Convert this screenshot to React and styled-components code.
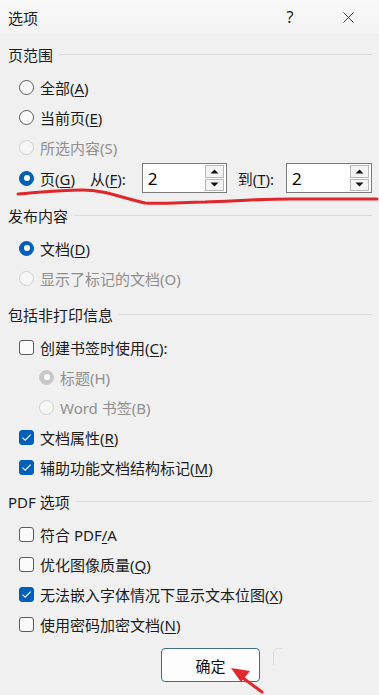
import React from "react";
import styled, { createGlobalStyle } from "styled-components";
import { X } from "lucide-react";

const GlobalStyle = createGlobalStyle`
  html, body {
    margin: 0;
    padding: 0;
    background: #f0f0f0;
  }
  body {
    font-family: "Noto Sans", "Noto Sans CJK SC", sans-serif;
    color: #1b1b1b;
  }
  u {
    text-underline-offset: 2px;
    text-decoration-thickness: 1px;
  }
`;

const Dialog = styled.div`
  position: relative;
  width: 379px;
  height: 695px;
  overflow: hidden;
  background: #f0f0f0;
`;

const TitleBar = styled.div`
  height: 34px;
  display: flex;
  align-items: center;
  padding: 0 8px;
  background: linear-gradient(#f9f9f9, #f3f3f3);
  font-size: 15px;
`;

const Title = styled.div`
  flex: 1;
`;

const TitleButton = styled.div`
  width: 46px;
  display: flex;
  justify-content: center;
  align-items: center;
  font-size: 16px;
  color: #222;
  margin-left: ${(p) => p.$gap || 0}px;
`;

const Body = styled.div`
  padding: 9px 7px 0 8px;
`;

const Section = styled.div`
  margin-bottom: ${(p) => p.$after ?? 10}px;
`;

const SectionHeader = styled.div`
  height: 22px;
  display: flex;
  align-items: center;
  gap: 6px;
  font-size: 15px;
  margin-bottom: 7px;

  &::after {
    content: "";
    flex: 1;
    height: 1px;
    background: #dadada;
  }
`;

const Row = styled.div`
  height: ${(p) => p.$h || 30}px;
  display: flex;
  align-items: center;
  padding-left: ${(p) => p.$indent || 11}px;
  font-size: 15px;
`;

const Radio = styled.span`
  box-sizing: border-box;
  width: 15px;
  height: 15px;
  border-radius: 50%;
  flex: none;
  margin-right: 6px;
  position: relative;
  border: 1px solid
    ${(p) => (p.$checked ? (p.$disabled ? "#c8c8c8" : "#005fb8") : p.$disabled ? "#cfcfcf" : "#5c5c5c")};
  background: ${(p) =>
    p.$checked ? (p.$disabled ? "#c8c8c8" : "#005fb8") : p.$disabled ? "#f6f6f6" : "#fafafa"};

  &::after {
    content: "";
    display: ${(p) => (p.$checked ? "block" : "none")};
    position: absolute;
    left: 50%;
    top: 50%;
    width: 6px;
    height: 6px;
    margin: -3px 0 0 -3px;
    border-radius: 50%;
    background: #fff;
  }
`;

const Box = styled.span`
  box-sizing: border-box;
  width: 15px;
  height: 15px;
  border-radius: 3px;
  flex: none;
  margin-right: 6px;
  display: flex;
  align-items: center;
  justify-content: center;
  border: 1px solid ${(p) => (p.$checked ? "#005fb8" : "#5c5c5c")};
  background: ${(p) => (p.$checked ? "#005fb8" : "#fafafa")};
`;

const Label = styled.span`
  color: ${(p) => (p.$disabled ? "#8f8f8f" : "#1b1b1b")};
  white-space: nowrap;
`;

const SpinLabel = styled.span`
  margin-left: ${(p) => p.$ml}px;
  margin-right: ${(p) => p.$mr}px;
  white-space: nowrap;
`;

const SpinBox = styled.div`
  box-sizing: border-box;
  width: ${(p) => p.$w}px;
  height: 30px;
  border: 1px solid #7a7a7a;
  background: #fff;
  display: flex;
  align-items: center;
  padding: 1px 2px 1px 0;
`;

const SpinValue = styled.div`
  flex: 1;
  padding-left: 5px;
  font-size: 17px;
  color: #000;
`;

const SpinButtons = styled.div`
  width: 19px;
  height: 100%;
  display: flex;
  flex-direction: column;
  gap: 1px;
`;

const SpinBtn = styled.div`
  flex: 1;
  box-sizing: border-box;
  border: 1px solid #b9b9b9;
  background: #f4f4f4;
  display: flex;
  align-items: center;
  justify-content: center;
`;

const Footer = styled.div`
  display: flex;
  align-items: flex-start;
  padding: 9px 0 0 153px;
`;

const OkButton = styled.div`
  box-sizing: border-box;
  width: 99px;
  height: 34px;
  border: 1px solid #3f6f86;
  border-radius: 4px;
  background: #fdfdfd;
  display: flex;
  align-items: center;
  justify-content: center;
  font-size: 15px;
  color: #111;
`;

const GhostCorner = styled.div`
  width: 8px;
  height: 16px;
  margin-left: 13px;
  border-left: 1px solid #dcdcdc;
  border-top: 1px solid #dcdcdc;
  border-top-left-radius: 5px;
`;

const Annotation = styled.svg`
  position: absolute;
  left: 0;
  top: 0;
  pointer-events: none;
`;

const Arrow = ({ up }) => (
  <svg width="9" height="5" viewBox="0 0 9 5">
    <path d={up ? "M0.5 4.5 L4.5 0.5 L8.5 4.5 Z" : "M0.5 0.5 L4.5 4.5 L8.5 0.5 Z"} fill="#111" />
  </svg>
);

const Check = () => (
  <svg width="11" height="9" viewBox="0 0 11 9">
    <path d="M1.5 4.6 L4.2 7.2 L9.6 1.6" fill="none" stroke="#fff" strokeWidth="1.1" />
  </svg>
);

const RadioRow = ({ checked, disabled, indent, children }) => (
  <Row $indent={indent}>
    <Radio $checked={checked} $disabled={disabled} />
    <Label $disabled={disabled}>{children}</Label>
  </Row>
);

const CheckRow = ({ checked, children }) => (
  <Row>
    <Box $checked={checked}>{checked && <Check />}</Box>
    <Label>{children}</Label>
  </Row>
);

const Spinner = ({ w, value }) => (
  <SpinBox $w={w}>
    <SpinValue>{value}</SpinValue>
    <SpinButtons>
      <SpinBtn>
        <Arrow up />
      </SpinBtn>
      <SpinBtn>
        <Arrow />
      </SpinBtn>
    </SpinButtons>
  </SpinBox>
);

export default function App() {
  return (
    <>
      <GlobalStyle />
      <Dialog>
        <TitleBar>
          <Title>选项</Title>
          <TitleButton>?</TitleButton>
          <TitleButton $gap={12}>
            <X size={19} strokeWidth={1.1} />
          </TitleButton>
        </TitleBar>
        <Body>
          <Section>
            <SectionHeader>页范围</SectionHeader>
            <RadioRow>
              全部(<u>A</u>)
            </RadioRow>
            <RadioRow>
              当前页(<u>E</u>)
            </RadioRow>
            <RadioRow disabled>所选内容(S)</RadioRow>
            <Row $h={32}>
              <Radio $checked />
              <Label>
                页(<u>G</u>)
              </Label>
              <SpinLabel $ml={15} $mr={16}>
                从(<u>F</u>):
              </SpinLabel>
              <Spinner w={86} value="2" />
              <SpinLabel $ml={11} $mr={12}>
                到(<u>T</u>):
              </SpinLabel>
              <Spinner w={87} value="2" />
            </Row>
          </Section>
          <Section>
            <SectionHeader>发布内容</SectionHeader>
            <RadioRow checked>
              文档(<u>D</u>)
            </RadioRow>
            <RadioRow disabled>显示了标记的文档(O)</RadioRow>
          </Section>
          <Section $after={8}>
            <SectionHeader>包括非打印信息</SectionHeader>
            <CheckRow>
              创建书签时使用(<u>C</u>):
            </CheckRow>
            <RadioRow checked disabled indent={31}>
              标题(H)
            </RadioRow>
            <RadioRow disabled indent={31}>
              Word 书签(B)
            </RadioRow>
            <CheckRow checked>
              文档属性(<u>R</u>)
            </CheckRow>
            <CheckRow checked>
              辅助功能文档结构标记(<u>M</u>)
            </CheckRow>
          </Section>
          <Section $after={0}>
            <SectionHeader>PDF 选项</SectionHeader>
            <CheckRow>
              符合 PDF<u>/</u>A
            </CheckRow>
            <CheckRow>
              优化图像质量(<u>Q</u>)
            </CheckRow>
            <CheckRow checked>
              无法嵌入字体情况下显示文本位图(<u>X</u>)
            </CheckRow>
            <CheckRow>
              使用密码加密文档(<u>N</u>)
            </CheckRow>
          </Section>
          <Footer>
            <OkButton>确定</OkButton>
            <GhostCorner />
          </Footer>
        </Body>
        <Annotation width="379" height="695" viewBox="0 0 379 695">
          <path
            d="M18 194 C35 193 55 190 82 190 C105 190 122 198 145 203 C165 204 185 202 205 202 C235 201 260 199 290 199 C320 199 350 199 377 199"
            fill="none"
            stroke="#e0262a"
            strokeWidth="3"
            strokeLinecap="round"
          />
          <path d="M262 692 L243 678" stroke="#e3282c" strokeWidth="3" strokeLinecap="round" />
          <path d="M231 668 L250 671 L241 682 Z" fill="#e3282c" />
        </Annotation>
      </Dialog>
    </>
  );
}
